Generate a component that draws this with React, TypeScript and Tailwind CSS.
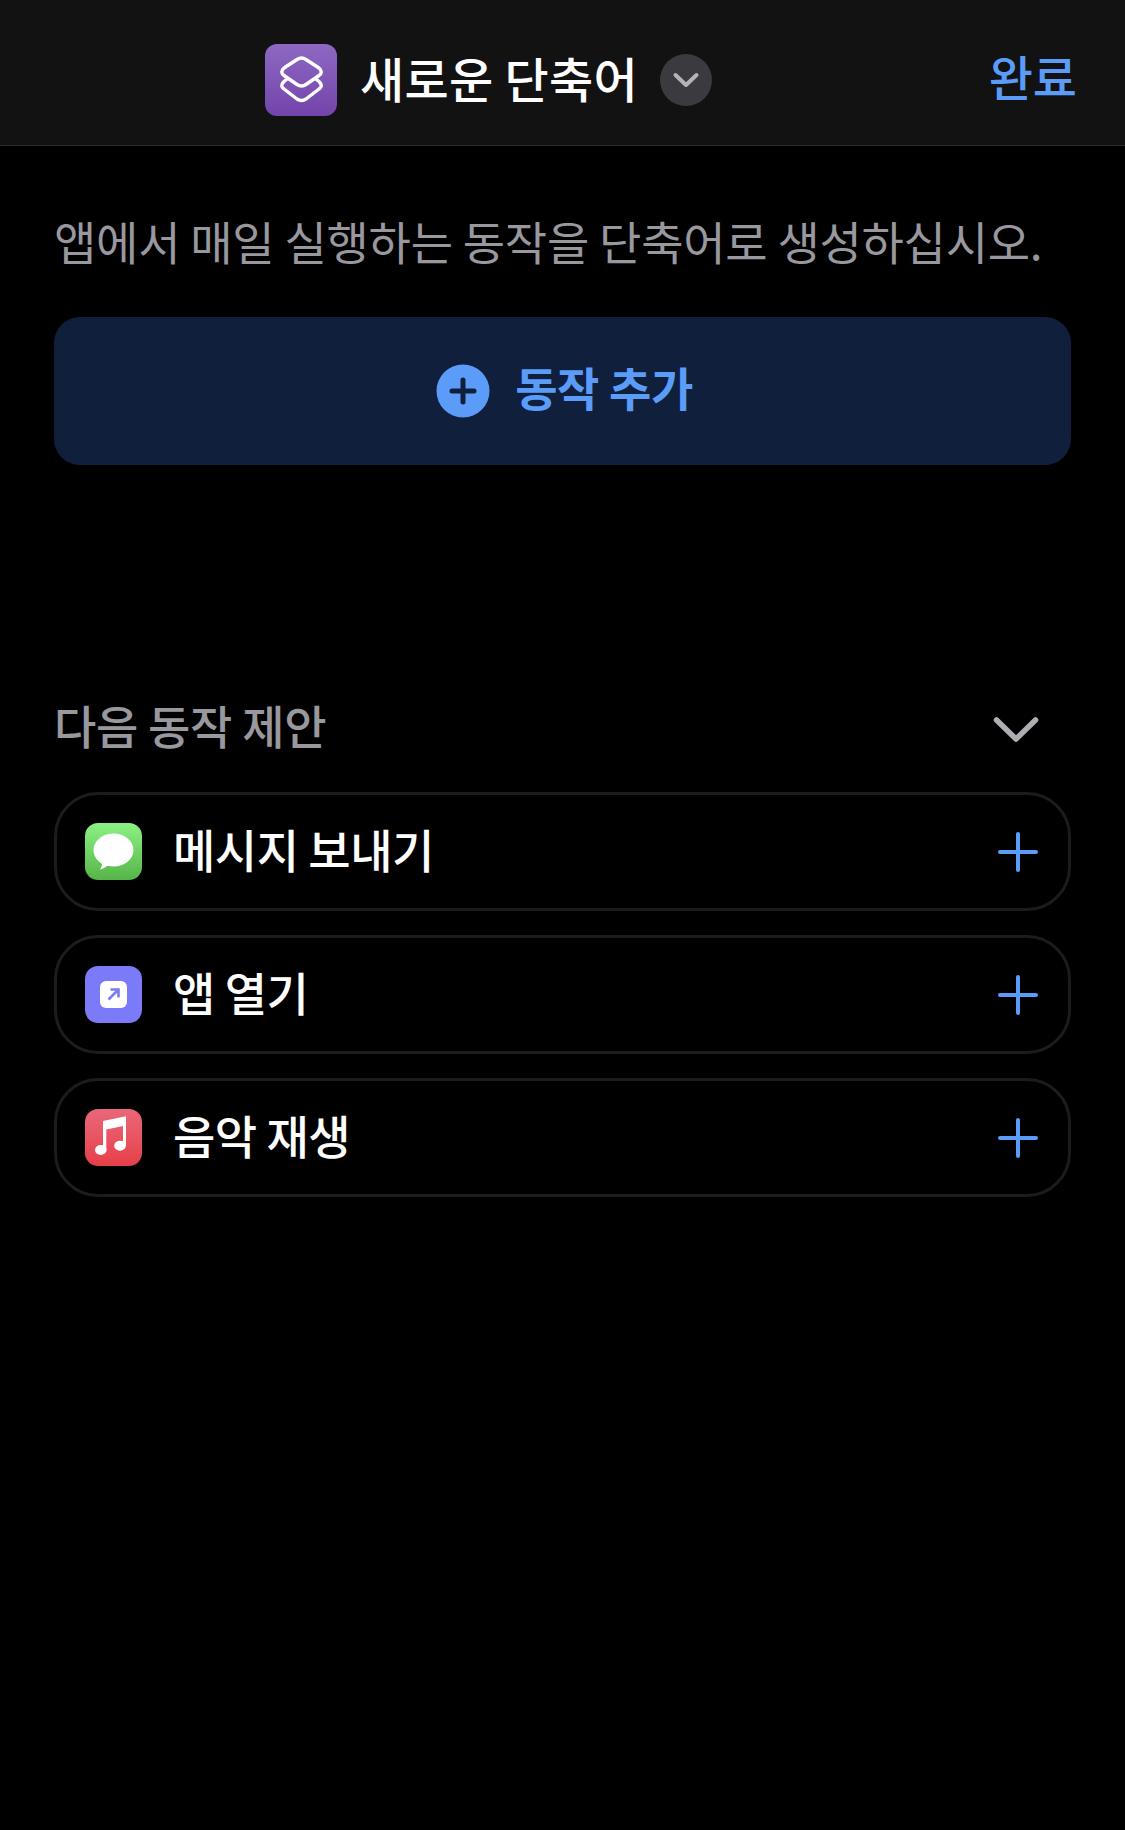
import React from 'react';

const font = { fontFamily: '"Noto Sans CJK KR", "Noto Sans", sans-serif' };

const MessageIcon = () => (
  <div className="flex h-[57px] w-[57px] shrink-0 items-center justify-center rounded-[13px] bg-gradient-to-b from-[#8cf283] to-[#56b548]">
    <svg width="57" height="57" viewBox="0 0 57 57">
      <path
        d="M28.500 10.500c11 0 20 7.500 20 16.500 0 9-9 16.500-20 16.500-2.200 0-4.300-.3-6.300-.8-2 2-5 3.300-7.700 3.800 1.400-1.400 2.400-3.200 2.600-5.600C11.800 37.500 8.500 32.500 8.500 27c0-9 9-16.500 20-16.500z"
        fill="#fff"
      />
    </svg>
  </div>
);

const OpenAppIcon = () => (
  <div className="flex h-[57px] w-[57px] shrink-0 items-center justify-center rounded-[13px] bg-[#7b7af8]">
    <div className="flex h-[27px] w-[27px] items-center justify-center rounded-[6px] bg-white">
      <svg width="27" height="27" viewBox="0 0 27 27" fill="none" stroke="#7b7af8" strokeWidth="2.600">
        <path d="M8.500 18.500 17.500 9.500M10.500 8.500h8v8" />
      </svg>
    </div>
  </div>
);

const MusicIcon = () => (
  <div className="flex h-[57px] w-[57px] shrink-0 items-center justify-center rounded-[13px] bg-gradient-to-b from-[#e9677a] to-[#e63e48]">
    <svg width="57" height="57" viewBox="0 0 57 57" fill="#fff">
      <path d="M18 12 41 7.300V36.500H38V17L21.300 20.500V41H18z" />
      <ellipse cx="15.800" cy="41" rx="5.800" ry="5" />
      <ellipse cx="35" cy="36.700" rx="5.800" ry="5" />
    </svg>
  </div>
);

const rows = [
  { label: '메시지 보내기', icon: <MessageIcon /> },
  { label: '앱 열기', icon: <OpenAppIcon /> },
  { label: '음악 재생', icon: <MusicIcon /> },
];

const App = () => {
  return (
    <div className="flex h-[1830px] w-[1125px] flex-col overflow-hidden bg-black" style={font}>
      <header className="relative flex h-[146px] items-center border-b border-[#2a2a2a] bg-[#121212] pt-[14px] pl-[265px]">
        <div className="h-[72px] w-[72px] rounded-[12px] bg-gradient-to-b from-[#8e68c2] to-[#7344ab]">
          <svg width="72" height="72" viewBox="0 0 72 72" fill="none" stroke="#fff" strokeWidth="3.400" strokeLinejoin="round">
            <path d="M32 15.500Q36.500 12.500 41 15.500L54 24Q58.500 28 54 31.500L41 40.500Q36.500 43.500 32 40.500L19 31.500Q14.500 28 19 24Z" />
            <path d="M22 35 19 37.500Q14.500 42 19 45L32 55Q36.500 58 41 55L54 45Q58.500 42 54 37.500L51 35" />
          </svg>
        </div>
        <span className="ml-[23px] pb-[5px] text-[48px] leading-none tracking-[0.3px] font-medium text-white">새로운 단축어</span>
        <div className="ml-[22px] flex h-[52px] w-[52px] items-center justify-center rounded-full bg-[#3a3a3f]">
          <svg width="30" height="22" viewBox="0 0 30 22" fill="none" stroke="#b4b4b8" strokeWidth="4" strokeLinecap="round" strokeLinejoin="round">
            <path d="M4.500 6 15 16 25.500 6" />
          </svg>
        </div>
        <span className="absolute right-[48px] top-[51px] text-[48px] leading-none font-medium text-[#5a9cf8]">완료</span>
      </header>

      <main className="flex flex-col px-[54px]">
        <p className="mt-[66px] text-[46px] leading-[56px] tracking-[-0.25px] whitespace-nowrap text-[#98989e]">
          앱에서 매일 실행하는 동작을 단축어로 생성하십시오.
        </p>

        <button className="mt-[49px] flex h-[148px] items-center justify-center rounded-[26px] bg-[#101f3c] pl-[4px]">
          <svg width="54" height="54" viewBox="0 0 54 54">
            <circle cx="27" cy="27" r="26.500" fill="#5a9cf8" />
            <path d="M27 16v22M16 27h22" stroke="#101f3c" strokeWidth="5" strokeLinecap="round" />
          </svg>
          <span className="ml-[25px] pb-[10px] text-[46px] leading-none tracking-[-0.4px] font-semibold text-[#5a9cf8]">동작 추가</span>
        </button>

        <div className="mt-[232px] flex h-[60px] items-center justify-between pr-[32px]">
          <h2 className="pb-[7px] text-[46px] leading-none tracking-[-0.3px] font-medium text-[#98989e]">다음 동작 제안</h2>
          <svg className="mt-[6px]" width="46" height="28" viewBox="0 0 46 28" fill="none" stroke="#aeaeb2" strokeWidth="5.500" strokeLinecap="round" strokeLinejoin="round">
            <path d="M3.500 4 23 23 42.500 4" />
          </svg>
        </div>

        <ul className="mt-[35px] flex flex-col gap-[24px]">
          {rows.map(row => (
            <li
              key={row.label}
              className="flex h-[119px] items-center rounded-[44px] border-[3px] border-[#1c1c1e] pr-[30px] pl-[28px]"
            >
              {row.icon}
              <span className="ml-[31px] flex-1 pb-[8px] text-[46px] leading-none tracking-[-0.5px] font-medium text-white">
                {row.label}
              </span>
              <svg width="40" height="40" viewBox="0 0 40 40" fill="none" stroke="#5a9cf8" strokeWidth="4" strokeLinecap="round">
                <path d="M20 2v36M2 20h36" />
              </svg>
            </li>
          ))}
        </ul>
      </main>
    </div>
  );
};

export default App;
